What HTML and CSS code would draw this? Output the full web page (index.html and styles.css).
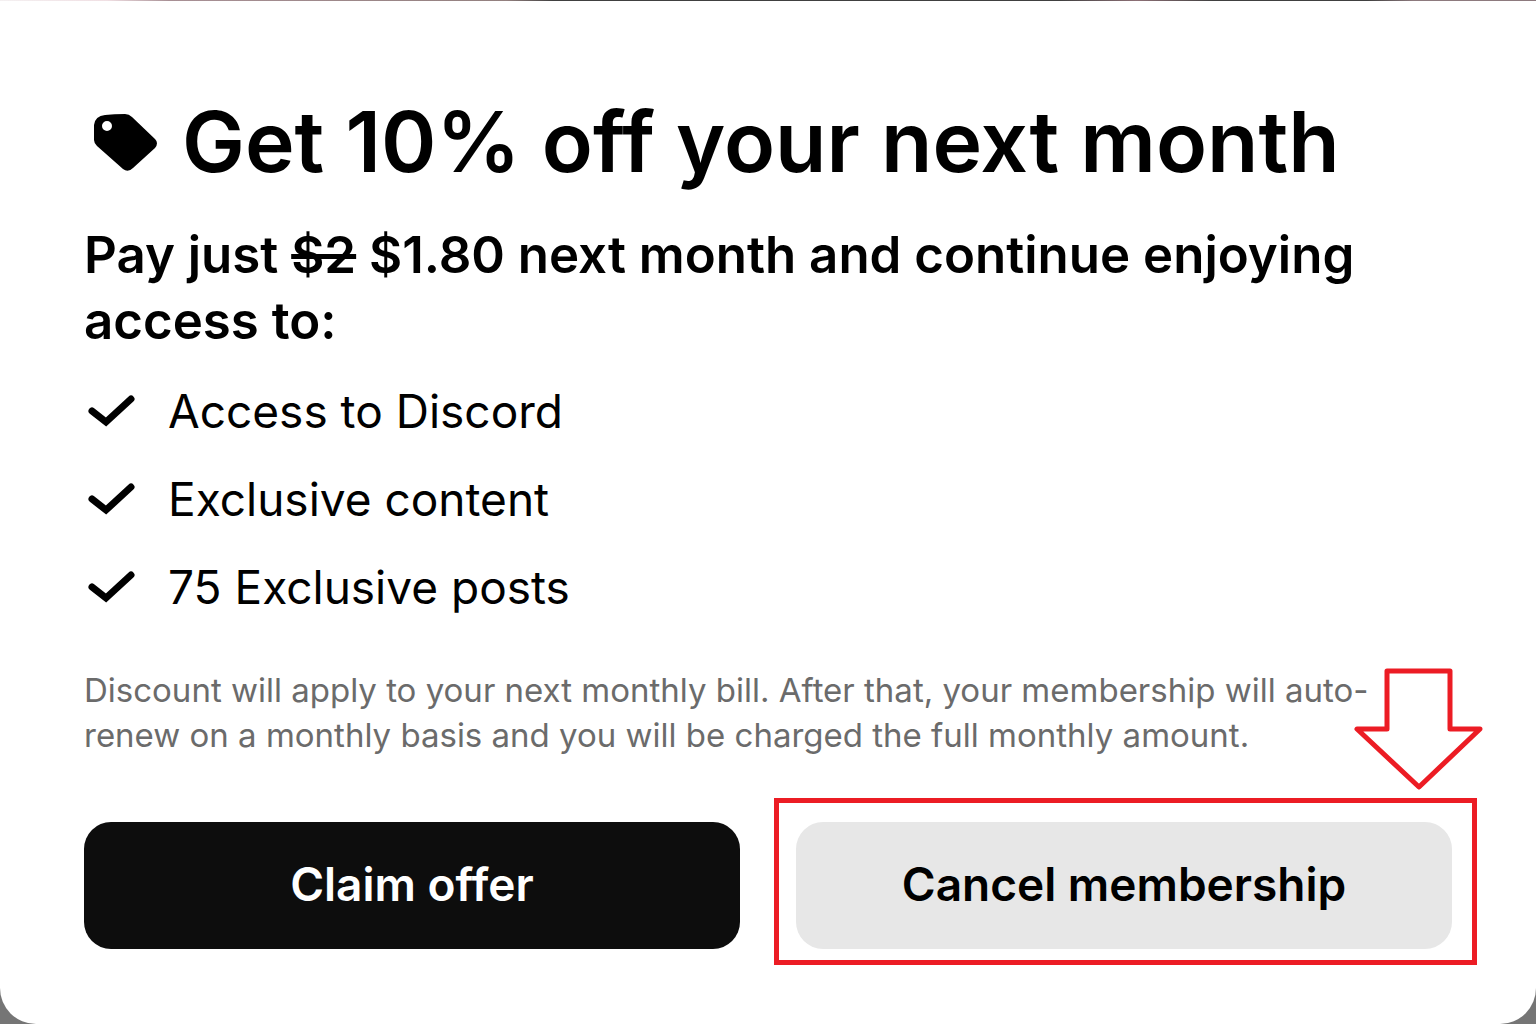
FILE: index.html
```html
<!DOCTYPE html>
<html lang="en">
<head>
<meta charset="utf-8">
<meta name="viewport" content="width=device-width, initial-scale=1">
<title>Get 10% off your next month</title>
<link rel="stylesheet" href="styles.css">
</head>
<body>
<main class="dialog">
  <header class="dialog-header">
    <svg class="tag-icon" viewBox="0 -2 64 60" aria-hidden="true">
      <path fill-rule="evenodd" d="M11 1Q20 0 31 0Q35 0 38 3L61 25Q65 29 61 34L39 54Q34 59 29 55L3 32Q0 29 0 26V11Q1 2 11 1ZM13 7a5 5 0 1 0 0 10a5 5 0 0 0 0-10Z"/>
    </svg>
    <h1 class="title">Get 10% off your next month</h1>
  </header>
  <h2 class="subtitle">Pay just <s>$2</s> $1.80 next month and continue enjoying access to:</h2>
  <ul class="benefits">
    <li class="benefit"><svg class="check-icon" viewBox="0 0 48 32" aria-hidden="true"><path d="M4 16L18 27L43 4"/></svg>Access to Discord</li>
    <li class="benefit"><svg class="check-icon" viewBox="0 0 48 32" aria-hidden="true"><path d="M4 16L18 27L43 4"/></svg>Exclusive content</li>
    <li class="benefit"><svg class="check-icon" viewBox="0 0 48 32" aria-hidden="true"><path d="M4 16L18 27L43 4"/></svg>75 Exclusive posts</li>
  </ul>
  <p class="terms">Discount will apply to your next monthly bill. After that, your membership will auto-renew on a monthly basis and you will be charged the full monthly amount.</p>
  <div class="actions">
    <button class="button button-primary" type="button">Claim offer</button>
    <div class="highlighted">
      <button class="button button-secondary" type="button">Cancel membership</button>
      <svg class="arrow" viewBox="0 0 130 124" aria-hidden="true"><path d="M33 4H96V62H126L65 120L3 62H33Z"/></svg>
    </div>
  </div>
</main>
</body>
</html>
```
FILE: styles.css
```css
* {
  box-sizing: border-box;
}

body {
  margin: 0;
  background: #757575;
  color: #000;
  font-family: Inter, "Liberation Sans", sans-serif;
}

/* Thin strip of the page behind the dialog */
body::before {
  content: "";
  display: block;
  height: 1px;
  background: linear-gradient(90deg, #f4f0f1 0%, #f0dfe3 7%, #a89095 11%, #93807f 33%, #404040 36%, #404040 69%, #8d7076 74%, #404040 79%, #404040 89%, #8d7a7e 92%, #8d7a7e 100%);
}

.dialog {
  min-height: calc(100vh - 1px);
  padding: 92px 84px 74px;
  background: #fff;
  border-radius: 0 0 36px 36px;
}

.dialog-header {
  display: flex;
  align-items: center;
  gap: 24px;
  padding-left: 10px;
}

.tag-icon {
  flex: none;
  width: 64px;
  height: 60px;
}

.title {
  margin: 0;
  font-size: 84px;
  font-weight: 600;
  line-height: 98px;
}

.subtitle {
  margin: 31px 0 0;
  font-size: 51px;
  font-weight: 600;
  line-height: 66px;
}

.benefits {
  display: grid;
  gap: 28px;
  margin: 27px 0 0;
  padding: 0;
  list-style: none;
}

.benefit {
  display: flex;
  align-items: center;
  gap: 32px;
  padding-left: 4px;
  font-size: 46px;
  line-height: 60px;
}

.check-icon {
  flex: none;
  width: 48px;
  height: 32px;
  fill: none;
  stroke: #000;
  stroke-width: 7;
  stroke-linecap: round;
}

.terms {
  margin: 51px 0 0;
  color: #6b6b6b;
  font-size: 33px;
  line-height: 45px;
}

.actions {
  display: grid;
  grid-template-columns: 1fr 1fr;
  gap: 56px;
  margin-top: 64px;
}

.button {
  display: block;
  width: 100%;
  height: 127px;
  padding: 0 24px 4px;
  border: 0;
  border-radius: 27px;
  font: inherit;
  font-size: 46px;
  font-weight: 600;
  line-height: 56px;
}

.button-primary {
  background: #0d0d0d;
  color: #fff;
}

.button-secondary {
  background: #e7e7e7;
  color: #000;
}

.highlighted {
  position: relative;
}

/* Red frame and arrow calling out the cancel button */
.highlighted::after {
  content: "";
  position: absolute;
  inset: -24px -25px -16px -22px;
  border: 5px solid #ec1c24;
  pointer-events: none;
}

.arrow {
  position: absolute;
  right: -32px;
  bottom: 158px;
  width: 130px;
  height: 124px;
  fill: none;
  stroke: #ec1c24;
  stroke-width: 5;
  stroke-linejoin: round;
}
```
